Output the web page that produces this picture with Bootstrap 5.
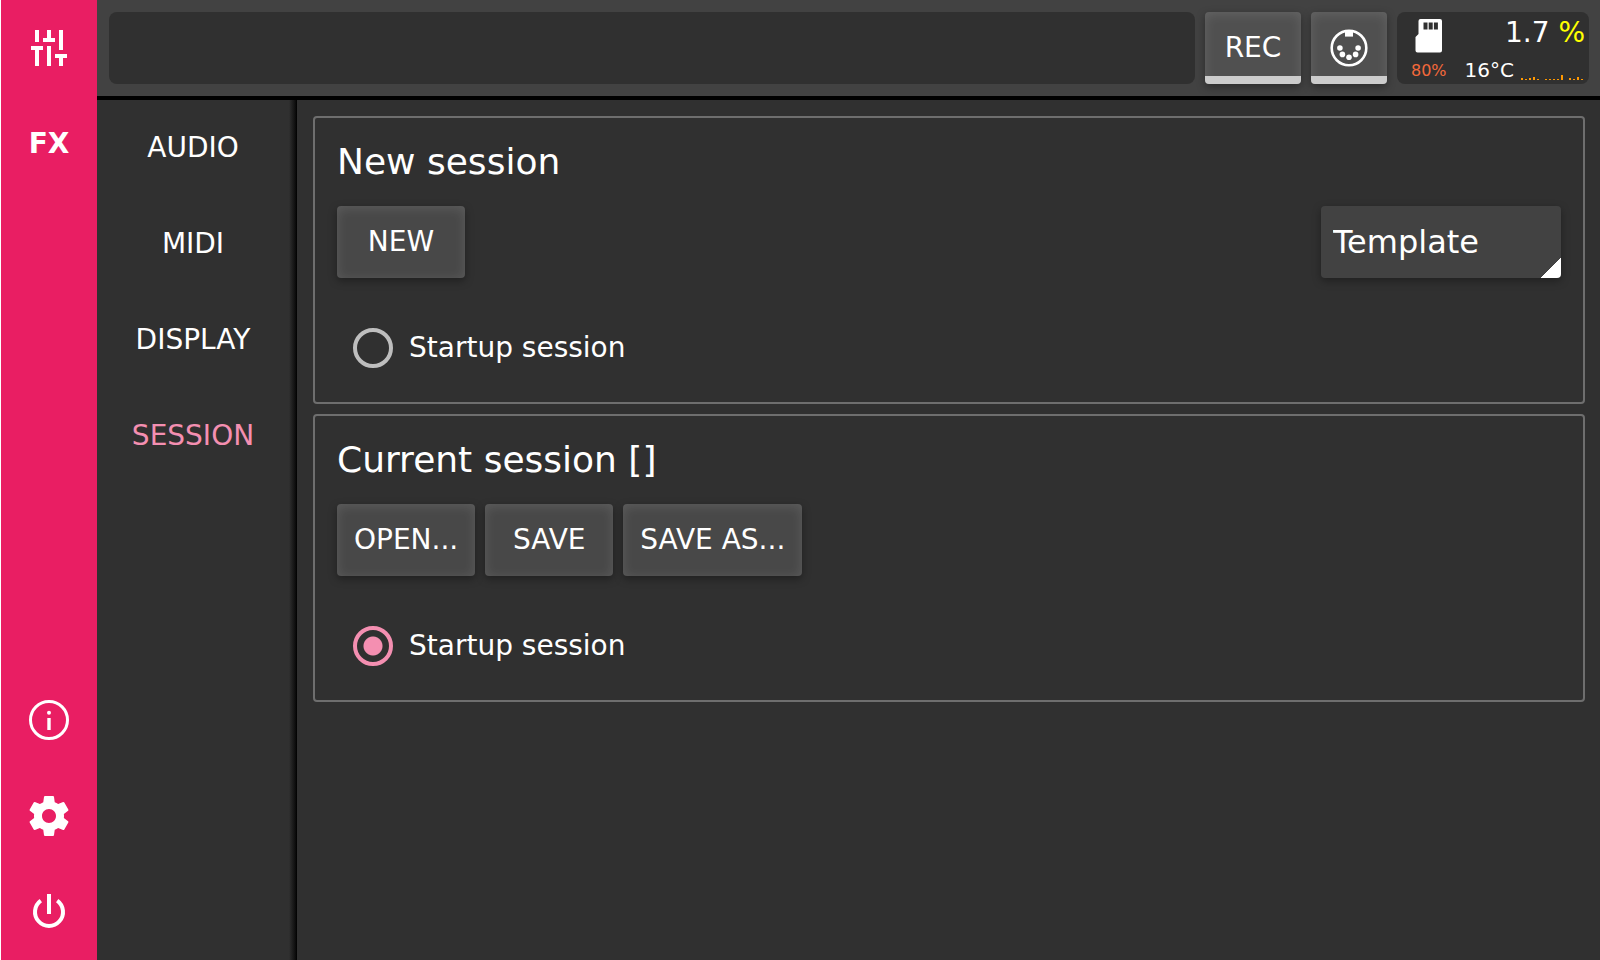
<!DOCTYPE html>
<html lang="en">
<head>
<meta charset="utf-8">
<meta name="viewport" content="width=device-width, initial-scale=1">
<title>Session settings</title>
<link href="https://cdn.jsdelivr.net/npm/bootstrap@5.3.0/dist/css/bootstrap.min.css" rel="stylesheet">
<style>
  :root { --accent: #e91e63; --accent-soft: #f48fb1; --surface: #303030; --bar: #424242; }
  body { background: var(--surface); color: #fff; font-family: "DejaVu Sans", sans-serif; font-size: 28px; line-height: 40px; }
  .rail { width: 97px; background: var(--accent); border-left: 1px solid #fff; }
  .rail-btn { height: 96px; border: 0; background: none; color: #fff; font-weight: 700; font-size: 28px; padding: 0; }
  .topbar { height: 100px; background: var(--bar); border-bottom: 4px solid #000; padding: 12px 11px 12px 12px; gap: 10px; }
  .status-line { background: var(--surface); border-radius: 8px; }
  .key { min-width: 128px; height: 72px; padding: 0 17px; border: 0; border-radius: 4px; color: #fff; font-size: 28px; background: #484848;
    box-shadow: 0 3px 8px rgba(0,0,0,.35), inset 0 2px 12px rgba(255,255,255,.12); }
  .key-bar { position: relative; background: #505050; }
  .key-bar::after { content: ""; position: absolute; left: 0; right: 0; bottom: 0; height: 8px; background: #ccc; border-radius: 0 0 4px 4px; }
  .key-rec { min-width: 96px; }
  .key-midi { min-width: 76px; }
  .key-row { gap: 10px; }
  .meters { width: 192px; background: var(--surface); border-radius: 8px; padding: 4px 4px 2px 14px; }
  .disk { color: #f4693b; font-size: 16px; line-height: 20px; width: 34px; padding-bottom: 1px; }
  .load { font-size: 28px; line-height: 34px; }
  .load span { color: #ff0; }
  .temp-row { gap: 7px; }
  .temp { font-size: 20px; line-height: 24px; }
  .side-tabs { width: 200px; padding-right: 8px; background: linear-gradient(to left, #000, #0f0f0f 2px, var(--surface) 8px); }
  .side-tabs .nav-link { height: 96px; color: #fff; padding: 0; border-radius: 0; display: flex; align-items: center; justify-content: center; }
  .side-tabs .nav-link.active { color: var(--accent-soft); background: none; }
  .content { padding: 16px 15px 16px 16px; gap: 10px; }
  .panel { border: 2px solid #6e6e6e; border-radius: 4px; padding: 22px 22px 14px; }
  .panel h2 { font-size: 36px; line-height: 44px; font-weight: 400; margin: 0 0 22px; }
  .template-pick { width: 240px; height: 72px; padding: 0 12px; border: 0; border-radius: 4px; color: #fff; font-size: 32px; appearance: none;
    background: linear-gradient(135deg, transparent 50%, #fff 50%) right bottom / 20px 20px no-repeat var(--bar);
    box-shadow: 0 3px 8px rgba(0,0,0,.35); }
  .startup { height: 80px; margin-top: 30px; padding-left: 16px; gap: 16px; }
  .startup input { appearance: none; width: 40px; height: 40px; margin: 0; border: 4px solid #bebebe; border-radius: 50%; }
  .startup input:checked { border-color: var(--accent-soft); background: radial-gradient(circle, var(--accent-soft) 9px, transparent 10px) border-box; }
</style>
</head>
<body>
<div class="d-flex min-vh-100">
  <nav class="rail d-flex flex-column flex-shrink-0" aria-label="Main">
    <button class="rail-btn" aria-label="Mixer"><svg width="48" height="48" viewBox="0 0 24 24" fill="#fff" shape-rendering="crispEdges"><path d="M5 3h2v6H5zM3 11h6v2H7v8H5v-8H3zM11 3h2v4h2v2H9V7h2zM11 11h2v10h-2zM17 3h2v10h-2zM15 15h6v2h-2v4h-2v-4h-2z"/></svg></button>
    <button class="rail-btn">FX</button>
    <button class="rail-btn mt-auto" aria-label="About"><svg width="48" height="48" viewBox="0 0 48 48"><circle cx="24" cy="24" r="18.5" fill="none" stroke="#fff" stroke-width="3"/><circle cx="24" cy="16.700" r="2" fill="#fff"/><path d="M22.300 22h3.400v12h-3.400z" fill="#fff"/></svg></button>
    <button class="rail-btn" aria-label="Settings"><svg width="48" height="48" viewBox="0 0 24 24" fill="#fff"><path d="M19.430 12.980c.040-.320.070-.640.070-.980s-.030-.660-.070-.980l2.110-1.650c.190-.150.240-.420.120-.640l-2-3.460c-.120-.220-.390-.300-.610-.220l-2.490 1c-.520-.400-1.080-.730-1.690-.980l-.380-2.650C14.460 2.180 14.250 2 14 2h-4c-.250 0-.460.180-.490.420l-.380 2.650c-.610.250-1.170.590-1.690.980l-2.490-1c-.230-.090-.490 0-.610.220l-2 3.460c-.130.220-.070.490.120.640l2.110 1.650c-.040.320-.070.650-.070.980s.030.660.070.980l-2.110 1.650c-.190.150-.240.420-.120.640l2 3.460c.120.220.390.300.610.220l2.490-1c.520.400 1.080.730 1.690.980l.380 2.650c.030.240.240.420.490.420h4c.250 0 .460-.180.490-.420l.380-2.650c.610-.250 1.170-.590 1.690-.980l2.490 1c.230.090.490 0 .610-.220l2-3.460c.120-.220.070-.490-.120-.640zM12 15.500c-1.930 0-3.500-1.570-3.500-3.500s1.570-3.500 3.500-3.500 3.500 1.570 3.500 3.500-1.570 3.500-3.500 3.500z"/></svg></button>
    <button class="rail-btn" aria-label="Power"><svg width="48" height="48" viewBox="0 0 24 24" fill="none" stroke="#fff" stroke-width="2"><path d="M12 3v10M16.100 6.280a7 7 0 1 1-8.200 0"/></svg></button>
  </nav>
  <div class="d-flex flex-column flex-grow-1">
    <header class="topbar d-flex">
      <div class="status-line flex-grow-1"></div>
      <button class="key key-bar key-rec">REC</button>
      <button class="key key-bar key-midi" aria-label="MIDI"><svg class="d-block mx-auto" width="38" height="38" viewBox="0 0 38 38"><circle cx="19" cy="19" r="17.300" fill="none" stroke="#fff" stroke-width="2.600"/><g fill="#fff"><path d="M15 2h8v5.600h-8z"/><circle cx="9.900" cy="19" r="2.800"/><circle cx="28.100" cy="19" r="2.800"/><circle cx="12.400" cy="25.400" r="2.800"/><circle cx="25.600" cy="25.400" r="2.800"/><circle cx="19" cy="28.300" r="2.800"/></g></svg></button>
      <div class="meters d-flex justify-content-between">
        <div class="d-flex flex-column justify-content-between align-items-center">
          <svg width="28" height="38" viewBox="0 0 28 38"><path fill="#fff" fill-rule="evenodd" d="M6.500 3H26a2 2 0 0 1 2 2v29.500a2 2 0 0 1-2 2H3.500a2 2 0 0 1-2-2V21l3-3V5a2 2 0 0 1 2-2zM9.500 6.500v7h4v-7zM14.700 6.500v7h4v-7zM19.900 6.500v7h4v-7z"/></svg>
          <div class="disk">80%</div>
        </div>
        <div class="d-flex flex-column justify-content-between align-items-end">
          <div class="load">1.7 <span>%</span></div>
          <div class="temp-row d-flex align-items-end">
            <div class="temp">16°C</div>
            <svg width="64" height="24" viewBox="0 -2 64 24" fill="#ff9800" shape-rendering="crispEdges"><path d="M0 18h2v2H0zM4 19h2v1H4zM8 18h2v2H8zM12 17h2v3h-2zM16 19h2v1h-2zM24 19h2v1h-2zM28 19h2v1h-2zM32 19h2v1h-2zM36 19h2v1h-2zM40 15h2v5h-2zM48 18h2v2h-2zM52 19h2v1h-2zM56 17h2v3h-2zM60 19h2v1h-2z"/></svg>
          </div>
        </div>
      </div>
    </header>
    <div class="d-flex flex-grow-1">
      <nav class="side-tabs nav flex-column flex-shrink-0" aria-label="Settings">
        <a class="nav-link" href="#audio">AUDIO</a>
        <a class="nav-link" href="#midi">MIDI</a>
        <a class="nav-link" href="#display">DISPLAY</a>
        <a class="nav-link active" href="#session" aria-current="page">SESSION</a>
      </nav>
      <main class="content d-flex flex-column flex-grow-1">
        <section class="panel">
          <h2>New session</h2>
          <div class="d-flex justify-content-between">
            <button class="key">NEW</button>
            <select class="template-pick" aria-label="Template"><option>Template</option></select>
          </div>
          <div class="startup d-flex align-items-center">
            <input type="radio" name="startup" id="startup-new">
            <label for="startup-new">Startup session</label>
          </div>
        </section>
        <section class="panel">
          <h2>Current session []</h2>
          <div class="key-row d-flex">
            <button class="key">OPEN...</button>
            <button class="key">SAVE</button>
            <button class="key">SAVE AS...</button>
          </div>
          <div class="startup d-flex align-items-center">
            <input type="radio" name="startup" id="startup-current" checked>
            <label for="startup-current">Startup session</label>
          </div>
        </section>
      </main>
    </div>
  </div>
</div>
<script src="https://cdn.jsdelivr.net/npm/bootstrap@5.3.0/dist/js/bootstrap.bundle.min.js"></script>
</body>
</html>
